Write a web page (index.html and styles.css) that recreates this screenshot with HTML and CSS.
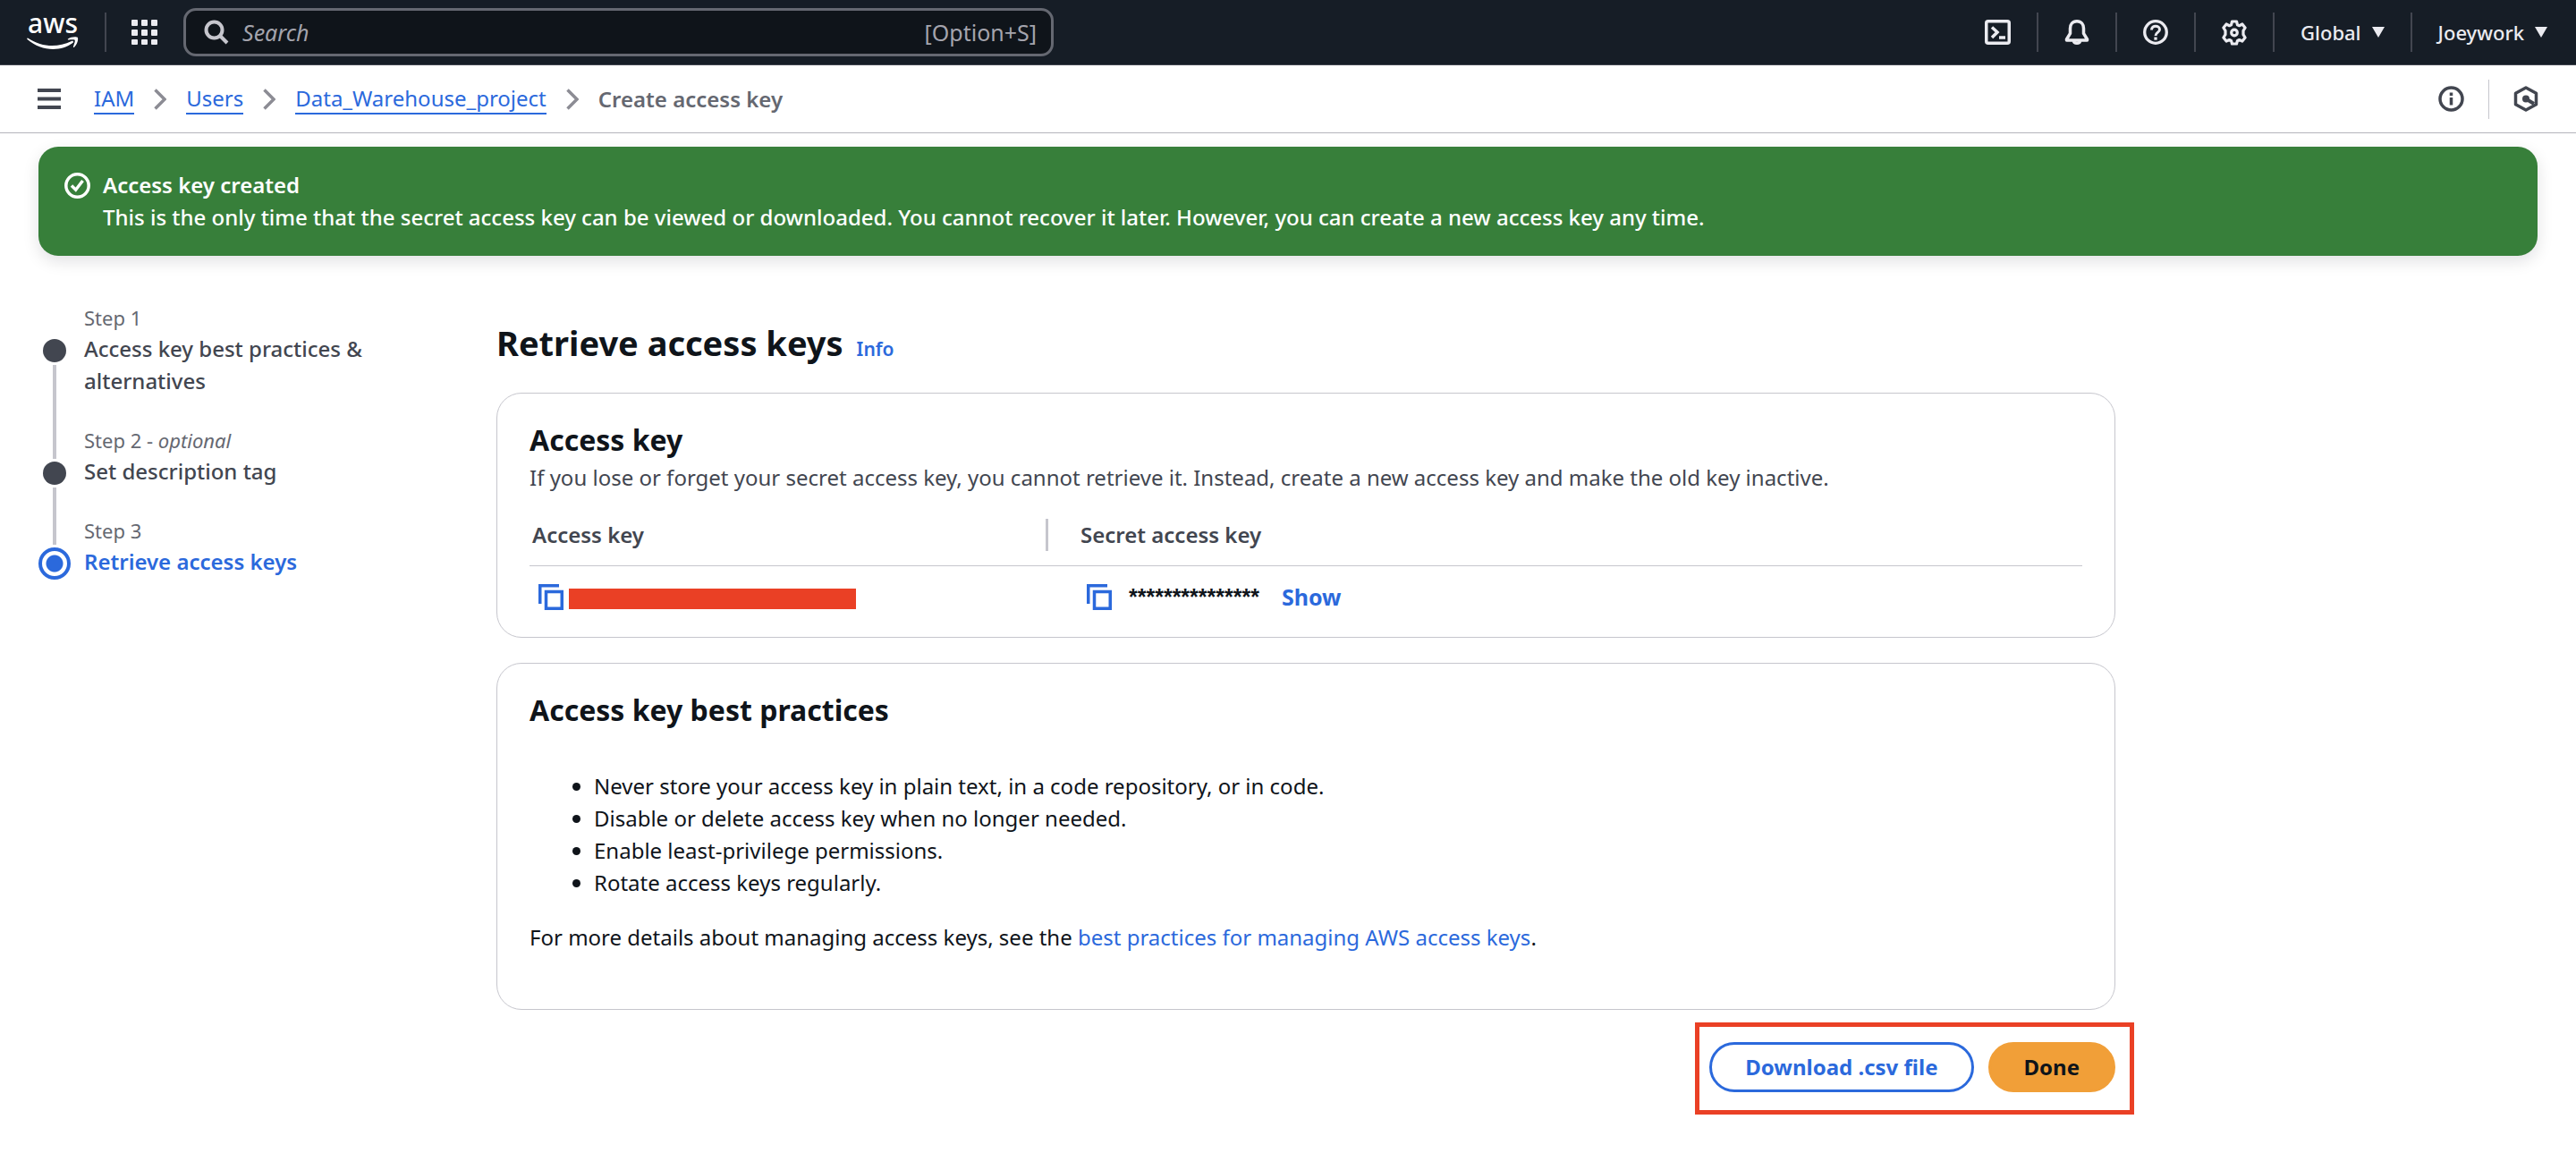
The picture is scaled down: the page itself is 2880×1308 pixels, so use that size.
FILE: index.html
```html
<!DOCTYPE html>
<html lang="en">
<head>
<meta charset="utf-8">
<meta name="viewport" content="width=device-width, initial-scale=1">
<title>Create access key | IAM</title>
<link rel="stylesheet" href="styles.css">
</head>
<body>
<header class="topnav">
  <a class="logo" href="#" aria-label="AWS home">
    <span class="logo-text">aws</span>
    <svg class="logo-smile" width="58" height="16" viewBox="0 0 58 16" fill="#fff" aria-hidden="true"><path d="M1 1.500C17 12 34 12.500 50 5c1.500-.6 2.800.8 1.300 2C38 17 16 16.500.5 3 0 2.200.4 1.200 1 1.500z"/><path d="M46 2.500C49 .2 55.500-.2 56.800 1c1.200 2-.8 8-3.800 10.700-.8.600-1.300.1-1-.700.8-2.200 2.300-6.200 1.600-7.200-.8-1-4.700-.6-6.600-.3-1 .1-1.600-.5-1-1z"/></svg>
  </a>
  <span class="rule"></span>
  <button class="icon-btn apps" aria-label="Services">
    <svg width="29" height="28" viewBox="0 0 29 28" fill="#ebebf0"><rect width="7" height="7" rx="1"/><rect x="11" width="7" height="7" rx="1"/><rect x="22" width="7" height="7" rx="1"/><rect y="11" width="7" height="7" rx="1"/><rect x="11" y="11" width="7" height="7" rx="1"/><rect x="22" y="11" width="7" height="7" rx="1"/><rect y="22" width="7" height="6" rx="1"/><rect x="11" y="22" width="7" height="6" rx="1"/><rect x="22" y="22" width="7" height="6" rx="1"/></svg>
  </button>
  <label class="search">
    <svg width="28" height="28" viewBox="0 0 28 28" fill="none" stroke="#c6c6cd" stroke-width="4"><circle cx="11.500" cy="11.500" r="9"/><path d="M18 18l8 8"/></svg>
    <input type="text" placeholder="Search" aria-label="Search">
    <span class="shortcut">[Option+S]</span>
  </label>
  <nav class="tools">
    <button class="icon-btn" aria-label="CloudShell"><svg width="29" height="28" viewBox="0 0 29 28" fill="none" stroke="#ebebf0" stroke-width="3.500"><rect x="1.750" y="1.750" width="25.500" height="24.500" rx="2"/><path d="M8 8.500l6 5.500-6 6"/><path d="M16 20h7"/></svg></button>
    <span class="rule"></span>
    <button class="icon-btn" aria-label="Notifications"><svg width="28" height="28" viewBox="0 0 28 28" fill="none" stroke="#ebebf0" stroke-width="3.500" stroke-linejoin="round"><path d="M14 1.800c-5 0-7.500 3.700-7.500 8v5.500L2.500 22v1h23v-1l-4-6.700V9.800c0-4.300-2.500-8-7.500-8z"/><path d="M10.500 24c.5 3 6.500 3 7 0"/></svg></button>
    <span class="rule"></span>
    <button class="icon-btn" aria-label="Help"><svg width="28" height="28" viewBox="0 0 28 28" fill="none" stroke="#ebebf0" stroke-width="3.300"><circle cx="14" cy="14" r="12.300"/><path d="M9.500 11.500c0-6 9-5.500 9-.5 0 3.300-4.500 3-4.500 7" stroke-width="3"/><path d="M14 19.500v3.200"/></svg></button>
    <span class="rule"></span>
    <button class="icon-btn" aria-label="Settings"><svg width="28" height="29" viewBox="0 0 28 29" fill="none" stroke="#ebebf0" stroke-width="3.200" stroke-linejoin="round"><path d="M11.500 2h5l1 3.800 2 .9 3.400-1.700 3.200 4-2.100 3.300v4.400l2.100 3.300-3.200 4-3.400-1.500-2 .9-1 3.600h-5l-1-3.600-2-.9L5.100 24l-3.200-4L4 16.700v-4.400L1.900 9l3.200-4 3.400 1.700 2-.9z"/><circle cx="14" cy="14.500" r="3.300"/></svg></button>
    <span class="rule"></span>
    <button class="menu-btn">Global <svg width="14" height="12" viewBox="0 0 14 12"><path d="M0 0h14L7 12z" fill="#ebebf0"/></svg></button>
    <span class="rule"></span>
    <button class="menu-btn">Joeywork <svg width="14" height="12" viewBox="0 0 14 12"><path d="M0 0h14L7 12z" fill="#ebebf0"/></svg></button>
  </nav>
</header>

<div class="crumb-bar">
  <button class="icon-btn hamburger" aria-label="Open navigation"><svg width="26" height="24" viewBox="0 0 26 24" fill="#424650"><path d="M0 0h26v4H0zM0 9.500h26v4H0zM0 19h26v4H0z"/></svg></button>
  <nav class="crumbs" aria-label="Breadcrumb">
    <a href="#">IAM</a>
    <svg width="14" height="24" viewBox="0 0 14 24" fill="none" stroke="#8c8c94" stroke-width="3.500"><path d="M1.500 1.500L12 12 1.500 22.500"/></svg>
    <a href="#">Users</a>
    <svg width="14" height="24" viewBox="0 0 14 24" fill="none" stroke="#8c8c94" stroke-width="3.500"><path d="M1.500 1.500L12 12 1.500 22.500"/></svg>
    <a href="#">Data_Warehouse_project</a>
    <svg width="14" height="24" viewBox="0 0 14 24" fill="none" stroke="#8c8c94" stroke-width="3.500"><path d="M1.500 1.500L12 12 1.500 22.500"/></svg>
    <span class="current">Create access key</span>
  </nav>
  <button class="icon-btn" aria-label="Info panel"><svg width="29" height="29" viewBox="0 0 29 29" fill="none" stroke="#424650" stroke-width="3.500"><circle cx="14.500" cy="14.500" r="12.500"/><path d="M14.500 7.500v3.500M14.500 13v8.500"/></svg></button>
  <span class="rule rule-light"></span>
  <button class="icon-btn" aria-label="Amazon Q"><svg width="28" height="29" viewBox="0 0 28 29" fill="none" stroke="#424650" stroke-width="3.500" stroke-linejoin="round"><path d="M14 2l11.500 6.300v12.400L14 27 2.500 20.700V8.300z"/><circle cx="14" cy="14.500" r="4" fill="#424650" stroke="none"/><path d="M14 14.500l9 5.500" stroke-width="4"/></svg></button>
</div>

<div class="page">
  <div class="flash" role="status">
    <svg width="29" height="29" viewBox="0 0 29 29" fill="none" stroke="#fff" stroke-width="3.500"><circle cx="14.500" cy="14.500" r="12.700"/><path d="M8 14.500l4.700 4.700L20.500 9"/></svg>
    <div>
      <strong>Access key created</strong>
      <p>This is the only time that the secret access key can be viewed or downloaded. You cannot recover it later. However, you can create a new access key any time.</p>
    </div>
  </div>

  <div class="wizard">
    <ol class="steps">
      <li class="step">
        <span class="marker"><i class="line line-none"></i><i class="dot"></i><i class="line line-rest"></i></span>
        <span class="step-body"><small>Step 1</small><span>Access key best practices &amp; alternatives</span></span>
      </li>
      <li class="step">
        <span class="marker"><i class="line"></i><i class="dot"></i><i class="line line-rest"></i></span>
        <span class="step-body"><small>Step 2 - <em>optional</em></small><span>Set description tag</span></span>
      </li>
      <li class="step step-active" aria-current="step">
        <span class="marker"><i class="line"></i><i class="dot"></i></span>
        <span class="step-body"><small>Step 3</small><span>Retrieve access keys</span></span>
      </li>
    </ol>

    <main class="content">
      <div class="title-row">
        <h1>Retrieve access keys</h1>
        <a class="info" href="#">Info</a>
      </div>

      <section class="card">
        <h2>Access key</h2>
        <p class="description">If you lose or forget your secret access key, you cannot retrieve it. Instead, create a new access key and make the old key inactive.</p>
        <table class="keys">
          <thead>
            <tr><th scope="col"><span>Access key</span></th><th scope="col">Secret access key</th></tr>
          </thead>
          <tbody>
            <tr>
              <td><div class="key">
                <button class="copy" aria-label="Copy access key"><svg width="28" height="29" viewBox="0 0 28 29" fill="none" stroke="#2b69dc" stroke-width="3.500"><path d="M1.750 22V1.750H23"/><rect x="8.500" y="8.500" width="17.750" height="18.750"/></svg></button>
                <span class="redacted"></span>
              </div></td>
              <td><div class="key">
                <button class="copy" aria-label="Copy secret access key"><svg width="28" height="29" viewBox="0 0 28 29" fill="none" stroke="#2b69dc" stroke-width="3.500"><path d="M1.750 22V1.750H23"/><rect x="8.500" y="8.500" width="17.750" height="18.750"/></svg></button>
                <span class="secret">***************</span>
                <button class="show">Show</button>
              </div></td>
            </tr>
          </tbody>
        </table>
      </section>

      <section class="card practices">
        <h2>Access key best practices</h2>
        <ul>
          <li>Never store your access key in plain text, in a code repository, or in code.</li>
          <li>Disable or delete access key when no longer needed.</li>
          <li>Enable least-privilege permissions.</li>
          <li>Rotate access keys regularly.</li>
        </ul>
        <p>For more details about managing access keys, see the <a href="#">best practices for managing AWS access keys</a>.</p>
      </section>

      <div class="actions">
        <button class="btn">Download .csv file</button>
        <button class="btn btn-primary">Done</button>
      </div>
    </main>
  </div>
</div>
</body>
</html>
```
FILE: styles.css
```css
* { box-sizing: border-box; }

body {
  margin: 0;
  background: #fff;
  color: #0f141a;
  font-family: "Noto Sans", "Open Sans", sans-serif;
  font-size: 24px;
  line-height: 36px;
}

h1, h2, p, ul, ol { margin: 0; padding: 0; }
svg { display: block; flex: none; }
a { color: #2b69dc; text-decoration: none; }

button {
  margin: 0;
  padding: 0;
  border: 0;
  background: none;
  color: inherit;
  font: inherit;
  cursor: pointer;
}

/* Top navigation */
.topnav {
  display: flex;
  align-items: center;
  height: 73px;
  padding: 0 32px 0 30px;
  background: #161d26;
  border-bottom: 1px solid #424650;
  color: #ebebf0;
}
.logo {
  display: flex;
  flex-direction: column;
  align-items: center;
  width: 58px;
  margin-right: 29px;
}
.logo-text {
  color: #fff;
  font-size: 30px;
  line-height: 20px;
  font-weight: 500;
}
.logo-smile { margin-top: 5px; }
.rule { flex: none; width: 2px; height: 44px; background: #424650; }
.rule-light { background: #c6c6cd; width: 1px; }
.icon-btn { display: flex; flex: none; }
.apps { margin: 0 29px 0 28px; }
.search {
  display: flex;
  align-items: center;
  flex: 0 1 973px;
  height: 54px;
  padding: 0 16px 0 20px;
  border: 3px solid #656871;
  border-radius: 14px;
  background: #0f141a;
  font-size: 25px;
}
.search input {
  flex: 1;
  min-width: 0;
  margin: 0 0 0 15px;
  padding: 0;
  border: 0;
  background: none;
  color: #ebebf0;
  font: inherit;
  outline: 0;
}
.search input::placeholder { color: #a4a4ad; font-style: italic; opacity: 1; }
.shortcut { color: #a4a4ad; }
.tools {
  display: flex;
  align-items: center;
  gap: 29px;
  margin-left: auto;
}
.menu-btn {
  display: flex;
  align-items: center;
  gap: 12px;
  font-size: 22px;
  font-weight: 500;
}

/* Breadcrumbs */
.crumb-bar {
  display: flex;
  align-items: center;
  gap: 27px;
  height: 76px;
  padding: 0 42px;
  border-bottom: 1px solid #b4b4bb;
}
.hamburger { margin-right: 10px; }
.crumbs {
  display: flex;
  align-items: center;
  gap: 22px;
  flex: 1;
  line-height: 32px;
}
.crumbs a { height: 34px; border-bottom: 2px solid #2b69dc; }
.crumbs .current { color: #656871; font-weight: 600; }

/* Page */
.page { padding: 15px 43px 62px; }
.flash {
  display: flex;
  gap: 14px;
  padding: 25px 29px;
  border-radius: 22px;
  background: #377f3a;
  color: #fff;
  font-weight: 500;
  box-shadow: 0 6px 18px rgba(0, 7, 22, 0.12);
}
.flash svg { margin-top: 4px; }
.flash strong { font-weight: 600; }

.wizard {
  display: grid;
  grid-template-columns: 476px minmax(0, 1810px);
  gap: 36px;
  margin-top: 52px;
}

/* Step navigation */
.steps { list-style: none; width: 400px; }
.step {
  display: grid;
  grid-template-columns: 36px 1fr;
  gap: 15px;
  color: #424650;
  font-weight: 500;
}
.marker { display: flex; flex-direction: column; align-items: center; gap: 3px; }
.line { width: 4px; height: 38px; background: #c6c6cd; }
.line-none { background: none; }
.line-rest { flex: 1; }
.dot { width: 26px; height: 26px; border-radius: 50%; background: #424650; }
.step-body { padding-bottom: 31px; }
.step-body small {
  display: block;
  color: #656871;
  font-size: 22px;
  line-height: 34px;
  font-weight: 400;
}
.step-active .step-body > span { color: #2b69dc; font-weight: 600; }
.step-active .line { height: 33px; }
.step-active .dot {
  width: 36px;
  height: 36px;
  border: 4px solid #2b69dc;
  background: radial-gradient(circle, #2b69dc 9px, #fff 10px);
}

/* Content */
.content { display: flex; flex-direction: column; padding-top: 18px; }
.title-row { display: flex; align-items: baseline; gap: 15px; margin-bottom: 29px; }
h1 { font-size: 38px; line-height: 54px; font-weight: 700; }
.info { font-size: 21px; font-weight: 600; line-height: 32px; }
h2 { font-size: 32px; line-height: 48px; font-weight: 700; }
.card {
  padding: 28px 36px 27px;
  border: 1px solid #c6c6cd;
  border-radius: 28px;
}
.description { color: #424650; }

.keys {
  width: 100%;
  margin-top: 12px;
  border-collapse: collapse;
  table-layout: fixed;
}
.keys th {
  padding: 16px 0 16px 3px;
  border-bottom: 1px solid #c6c6cd;
  color: #424650;
  font-weight: 600;
  text-align: left;
}
.keys th:first-child { width: 580px; }
.keys th span { display: block; border-right: 3px solid #c6c6cd; }
.keys th + th { padding-left: 36px; }
.keys td { padding: 16px 0 0 10px; }
.keys td + td { padding-left: 43px; }
.key { display: flex; align-items: center; height: 36px; font-size: 25px; }
.copy { display: flex; }
.redacted { width: 321px; height: 23px; margin: 4px 0 0 6px; background: #ea4025; }
.secret { margin: 0 25px 0 19px; font-family: "Liberation Sans", sans-serif; font-weight: 700; }
.show { color: #2b69dc; font-weight: 700; }

.practices { margin-top: 28px; padding-bottom: 62px; }
.practices ul { margin: 43px 0 25px; padding-left: 72px; }

/* Actions */
.actions {
  display: flex;
  gap: 16px;
  align-self: flex-end;
  margin: 14px -21px 0 0;
  padding: 17px 16px 20px 11px;
  border: 5px solid #ea4025;
}
.btn {
  height: 56px;
  padding: 0 37px;
  border: 3px solid #2b69dc;
  border-radius: 28px;
  color: #2b69dc;
  font-weight: 700;
}
.btn-primary { border-color: #f19f38; background: #f19f38; color: #0f141a; }
```
